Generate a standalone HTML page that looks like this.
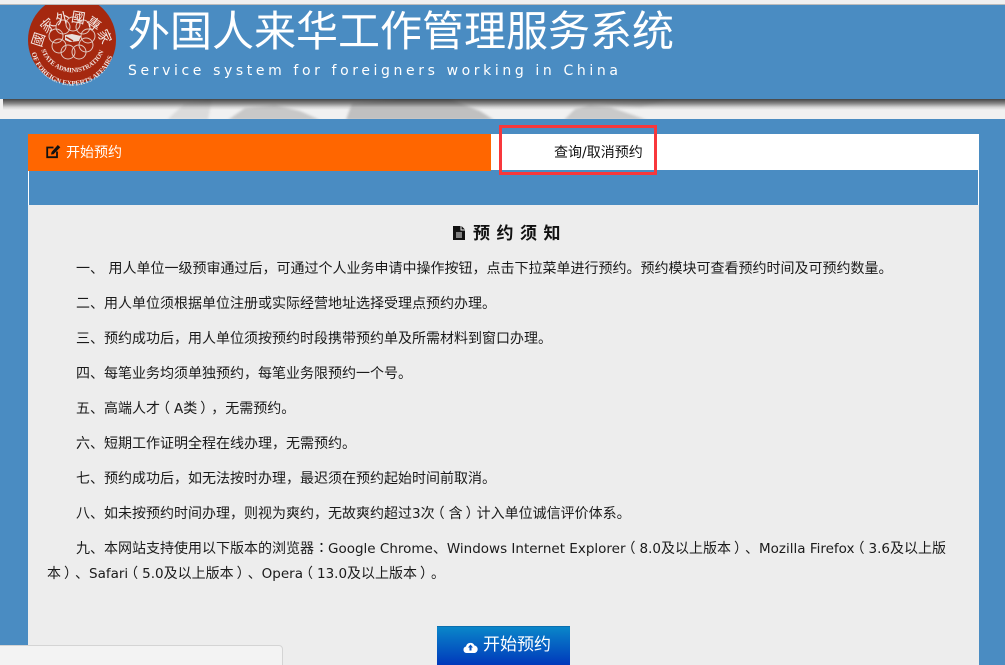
<!DOCTYPE html>
<html><head><meta charset="utf-8"><style>
html,body{margin:0;padding:0;width:1005px;height:665px;overflow:hidden;background:#ededed}
body{position:relative;font-family:"DejaVu Sans","Noto Sans CJK SC",sans-serif;color:#111;text-spacing-trim:space-all;font-feature-settings:"chws" 0}
div{position:absolute;box-sizing:border-box}
.p{left:47px;width:925px;font-size:14px;line-height:25px;white-space:nowrap;color:#1a1a1a}
.l,.r,.c{font-style:normal;position:relative}
.l{left:-4px}.r{left:3px}.c{left:4px;top:-1px}
b{font-weight:normal;font-size:13.5px}
</style></head><body>
<div style="left:0;top:0;width:1005px;height:5px;background:#f0f0f0;border-bottom:1px solid #bbb"></div>
<div style="left:0;top:99px;width:1005px;height:21px;background:#f1f1f1"></div>
<svg style="position:absolute;left:0;top:99px" width="1005" height="21"><defs><filter id="f"><feGaussianBlur stdDeviation="1.2"/></filter></defs><g fill="#8f8f8f" filter="url(#f)"><path d="M167 21 L185 4 L212 0 L208 21Z" opacity=".22"/><path d="M228 21 L245 9 L275 6 L300 12 L320 21Z" opacity=".42"/><path d="M346 21 L352 4 L400 0 L450 0 L480 12 L494 21Z" opacity=".5"/><path d="M564 21 L575 10 L590 6 L610 8 L647 21Z" opacity=".4"/><path d="M600 4 L650 0 L670 0 L640 8Z" opacity=".25"/></g></svg>
<div style="left:3px;top:99px;width:1002px;height:11px;background:linear-gradient(rgba(50,50,50,.9),rgba(90,90,90,.7) 40%,rgba(170,170,170,.4) 75%,rgba(200,200,200,0))"></div>
<div style="left:0;top:5px;width:1005px;height:94px;background:#4a8cc2"></div>
<div style="left:0;top:119px;width:1005px;height:546px;background:#4a8cc2"></div>

<svg style="position:absolute;left:26px;top:5px" width="94" height="82" viewBox="26 5 94 82">
<circle cx="72" cy="40" r="44" fill="#a5280f"/>
<g fill="none" stroke="#e0c8c0" stroke-width="1">
<circle cx="73" cy="24" r="7"/><circle cx="83" cy="27" r="7"/><circle cx="88" cy="36" r="7"/><circle cx="86" cy="45" r="7"/><circle cx="79" cy="52" r="7"/><circle cx="68" cy="52" r="7"/><circle cx="59" cy="46" r="7"/><circle cx="56" cy="36" r="7"/><circle cx="63" cy="27" r="7"/></g>
<path d="M65 35 L72 34 L81 36 L79 41 L70 42 L65 40Z" fill="#e8e0dc"/><path d="M66 37 L73 41" stroke="#a5280f" stroke-width="1.5"/>
<defs><path id="a" d="M42 48 A30 26 0 1 1 102 48"/><path id="b" d="M31 50 A42 42 0 0 0 114 50"/><path id="c" d="M41 49 A33 32 0 0 0 105 47"/></defs>
<text font-family="Noto Sans CJK TC,sans-serif" font-size="14" fill="#f2e6e2" letter-spacing=".2"><textPath href="#a">國家外國專家局</textPath></text>
<text font-family="Liberation Serif,serif" font-size="7" font-weight="bold" fill="#f2e6e2"><textPath href="#b" startOffset="3">OF FOREIGN EXPERTS AFFAIRS</textPath></text>
<text font-family="Liberation Serif,serif" font-size="6.5" font-weight="bold" fill="#f2e6e2"><textPath href="#c" startOffset="1">STATE ADMINISTRATION</textPath></text>
</svg>

<div style="left:128px;top:1px;font:400 42px/56px 'Noto Sans CJK SC',sans-serif;color:#fff;white-space:nowrap">外国人来华工作管理服务系统</div>
<div style="left:128px;top:62px;font-size:14px;line-height:18px;color:#fff;letter-spacing:3.61px;white-space:nowrap">Service system for foreigners working in China</div>

<div style="left:28px;top:205px;width:951px;height:460px;background:#ededed"></div>
<div style="left:28px;top:134px;width:951px;height:71px;background:#fff"></div>
<div style="left:29px;top:170px;width:949px;height:35px;background:#4a8cc2"></div>
<div style="left:28px;top:134px;width:463px;height:37px;background:#ff6600"></div>
<svg style="position:absolute;left:46px;top:144px" width="15" height="15" viewBox="0 0 15 15"><path d="M11 7.5V13.2H1.2V3.5H7.5" fill="none" stroke="#111" stroke-width="1.8"/><path d="M5 10.5 L5.6 8 L11.8 1 L14.3 3.2 L7.5 10.2Z" fill="#111"/></svg>
<div style="left:66px;top:143px;font-size:14px;line-height:20px;color:#fff;white-space:nowrap">开始预约</div>
<div style="left:554px;top:143px;font-size:14px;line-height:20px;color:#111;white-space:nowrap">查询/取消预约</div>
<div style="left:499px;top:125px;width:158px;height:50px;border:3px solid #f8383c"></div>

<svg style="position:absolute;left:453px;top:226px" width="12" height="14" viewBox="0 0 12 14"><path d="M0 0H7.5V4.5H12V14H0Z M8.5 0L12 3.5H8.5Z" fill="#111"/><path d="M3 7H9M3 9H9M3 11H9" stroke="#ededed" stroke-width="1"/></svg>
<div style="left:473px;top:223px;font-size:17px;line-height:22px;font-weight:bold;letter-spacing:6.5px;white-space:nowrap;color:#111">预约须知</div>

<div class="p" style="top:257px;padding-left:29px">一、 用人单位一级预审通过后，可通过个人业务申请中操作按钮，点击下拉菜单进行预约。预约模块可查看预约时间及可预约数量。</div>
<div class="p" style="top:292px;padding-left:29px">二、用人单位须根据单位注册或实际经营地址选择受理点预约办理。</div>
<div class="p" style="top:327px;padding-left:29px">三、预约成功后，用人单位须按预约时段携带预约单及所需材料到窗口办理。</div>
<div class="p" style="top:362px;padding-left:29px">四、每笔业务均须单独预约，每笔业务限预约一个号。</div>
<div class="p" style="top:397px;padding-left:29px">五、高端人才<i class="l">（</i><b>A</b>类<i class="r">）</i>，无需预约。</div>
<div class="p" style="top:432px;padding-left:29px">六、短期工作证明全程在线办理，无需预约。</div>
<div class="p" style="top:467px;padding-left:29px">七、预约成功后，如无法按时办理，最迟须在预约起始时间前取消。</div>
<div class="p" style="top:502px;padding-left:29px">八、如未按预约时间办理，则视为爽约，无故爽约超过<b>3</b>次<i class="l">（</i>含<i class="r">）</i>计入单位诚信评价体系。</div>
<div class="p" style="top:537px;padding-left:29px">九、本网站支持使用以下版本的浏览器<i class="c">：</i><b>Google Chrome</b>、<b>Windows Internet Explorer</b><i class="l">（</i><b>8.0</b>及以上版本<i class="r">）</i>、<b>Mozilla Firefox</b><i class="l">（</i><b>3.6</b>及以上版</div>
<div class="p" style="top:562px">本<i class="r">）</i>、<b>Safari</b><i class="l">（</i><b>5.0</b>及以上版本<i class="r">）</i>、<b>Opera</b><i class="l">（</i><b>13.0</b>及以上版本<i class="r">）</i>。</div>

<div style="left:437px;top:626px;width:133px;height:39px;background:linear-gradient(#0a86c9,#0038bb);border-top:1px solid #0d6fae"></div>
<svg style="position:absolute;left:463px;top:641px" width="15" height="12" viewBox="0 0 15 12"><path d="M3.5 12A3.3 3.3 0 0 1 3 5.5 4.5 4.5 0 0 1 11.5 4.5 3.8 3.8 0 0 1 11.5 12Z" fill="#fff"/><path d="M7.5 3.5L10 6.5H8.5V9.5H6.5V6.5H5Z" fill="#0a55c0"/></svg>
<div style="left:483px;top:634px;font-size:17px;line-height:22px;color:#fff;white-space:nowrap">开始预约</div>

<div style="left:-4px;top:645px;width:287px;height:30px;background:#f3f3f3;border:1px solid #d4d4d4;border-radius:4px"></div>
</body></html>
